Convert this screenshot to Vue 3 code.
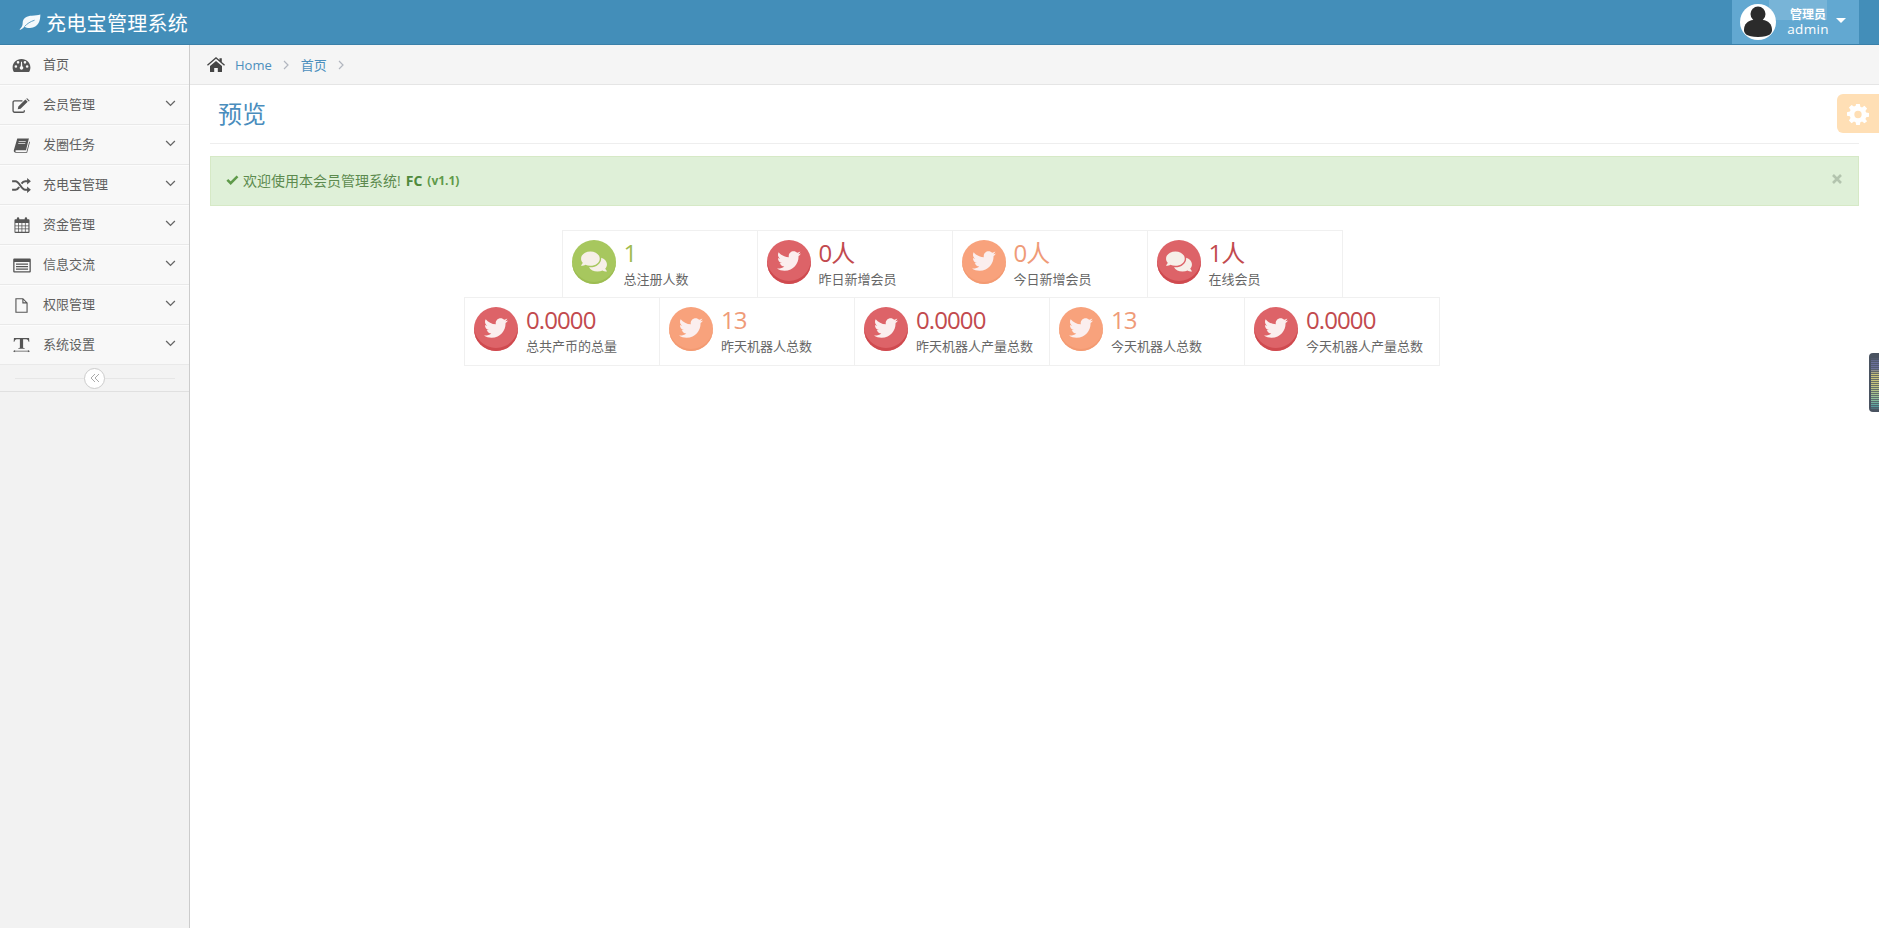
<script setup>
const TW = 'M459.37 151.716c.325 4.548.325 9.097.325 13.645 0 138.72-105.583 298.558-298.558 298.558-59.452 0-114.68-17.219-161.137-47.106 8.447.974 16.568 1.299 25.34 1.299 49.055 0 94.213-16.568 130.274-44.832-46.132-.975-84.792-31.188-98.112-72.772 6.498.974 12.995 1.624 19.818 1.624 9.421 0 18.843-1.3 27.614-3.573-48.081-9.747-84.143-51.98-84.143-102.985v-1.299c13.969 7.797 30.214 12.67 47.431 13.319-28.264-18.843-46.781-51.005-46.781-87.391 0-19.492 5.197-37.36 14.294-52.954 51.655 63.675 129.3 105.258 216.365 109.807-1.624-7.797-2.599-15.918-2.599-24.04 0-57.828 46.782-104.934 104.934-104.934 30.213 0 57.502 12.67 76.67 33.137 23.715-4.548 46.456-13.32 66.599-25.34-7.798 24.366-24.366 44.833-46.132 57.827 21.117-2.273 41.584-8.122 60.426-16.243-14.292 20.791-32.161 39.308-52.628 54.253z'
const CM = 'M416 192c0-88.4-93.1-160-208-160S0 103.6 0 192c0 34.3 14.1 65.9 38 92-13.4 30.2-35.5 54.2-35.8 54.5-2.2 2.3-2.8 5.7-1.5 8.7S4.8 352 8 352c36.6 0 66.9-12.3 88.7-25 32.2 15.7 70.3 25 111.3 25 114.9 0 208-71.6 208-160zm122 220c23.9-26 38-57.7 38-92 0-66.9-53.5-124.2-129.3-148.1.9 6.6 1.3 13.3 1.3 20.1 0 105.9-107.7 192-240 192-10.8 0-21.3-.8-31.7-1.9C207.8 439.6 281.8 480 368 480c41 0 79.1-9.2 111.3-25 21.8 12.7 52.1 25 88.7 25 3.2 0 6.1-1.9 7.3-4.8 1.3-2.9.7-6.3-1.5-8.7-.3-.3-22.4-24.2-35.8-54.5z'

const menu = [
  { text: '首页', icon: 'dash', arrow: false },
  { text: '会员管理', icon: 'edit', arrow: true },
  { text: '发圈任务', icon: 'book', arrow: true },
  { text: '充电宝管理', icon: 'shuffle', arrow: true },
  { text: '资金管理', icon: 'cal', arrow: true },
  { text: '信息交流', icon: 'list', arrow: true },
  { text: '权限管理', icon: 'file', arrow: true },
  { text: '系统设置', icon: 'text', arrow: true }
]
const row1 = [
  { v: '1', l: '总注册人数', c: 'green', i: 'cm' },
  { v: '0人', l: '昨日新增会员', c: 'red', i: 'tw' },
  { v: '0人', l: '今日新增会员', c: 'orange', i: 'tw' },
  { v: '1人', l: '在线会员', c: 'red', i: 'cm' }
]
const row2 = [
  { v: '0.0000', l: '总共产币的总量', c: 'red', i: 'tw' },
  { v: '13', l: '昨天机器人总数', c: 'orange', i: 'tw' },
  { v: '0.0000', l: '昨天机器人产量总数', c: 'red', i: 'tw' },
  { v: '13', l: '今天机器人总数', c: 'orange', i: 'tw' },
  { v: '0.0000', l: '今天机器人产量总数', c: 'red', i: 'tw' }
]
const rows = [row1, row2]
</script>

<template>
  <div class="page">
    <header class="navbar">
      <div class="brand">
        <svg class="leaf" viewBox="0 0 24 18" width="22" height="17"><path fill="#f4f9fc" d="M.5 16.500C3 14.500 4 12.500 4 9.500 4 4 9 1.500 14 1.500c4 0 6.500-.5 9.300-1.300 0 6.300-1.800 14.300-11.300 14.800-2.500.1-4.500-.5-6-1.500-1.500 1.500-3 2.700-4.300 3.500z"/><path fill="none" stroke="#438eb9" stroke-width=".9" d="M6 13.500C9 10 12.500 8 17 6.500"/></svg>
        <span>充电宝管理系统</span>
      </div>
      <div class="user">
        <span class="ghost"></span>
        <span class="avatar">
          <svg viewBox="0 0 36 36" width="36" height="36"><circle cx="18" cy="10" r="7.500" fill="#2b2b2b"/><path fill="#2b2b2b" d="M4 26c0-6 4-9.500 9-10h10c5 .5 9 4 9 10 0 3-2 7-14 7S4 29 4 26z"/></svg>
        </span>
        <span class="who"><small>管理员</small><b>admin</b></span>
        <span class="caret"></span>
      </div>
    </header>

    <div class="body">
      <aside class="sidebar">
        <ul class="nav">
          <li v-for="m in menu" :key="m.text" class="item">
            <span class="mi">
              <svg v-if="m.icon === 'dash'" viewBox="0 0 20 16" width="19" height="15"><path fill="#555" fill-rule="evenodd" d="M10 1C4.500 1 .5 5 .5 10c0 2 .6 3.700 1.500 5h16c.9-1.300 1.500-3 1.500-5 0-5-4-9-9.500-9zM4 10.500a1.400 1.400 0 1 1 0-2.800 1.400 1.400 0 0 1 0 2.800zM6.300 6a1.400 1.400 0 1 1 0-2.800 1.400 1.400 0 0 1 0 2.800zM10 12.500a2 2 0 0 1-.8-3.800L9.500 4h1l.3 4.700a2 2 0 0 1-.8 3.800zM13.700 6a1.400 1.400 0 1 1 0-2.800 1.400 1.400 0 0 1 0 2.800zM16 10.500a1.400 1.400 0 1 1 0-2.800 1.400 1.400 0 0 1 0 2.800z"/></svg>
              <svg v-else-if="m.icon === 'edit'" viewBox="0 0 20 16" width="19" height="15"><path fill="none" stroke="#555" stroke-width="1.400" d="M13 13v1a1.300 1.300 0 0 1-1.300 1.200H2.500A1.500 1.500 0 0 1 1 13.700V4.500A1.500 1.500 0 0 1 2.500 3H11"/><path fill="#555" d="M6 12l.6-3 7.500-7.500 2.500 2.500L9 11.500zM15 .8l1-.6 2.700 2.600-.8 1z"/></svg>
              <svg v-else-if="m.icon === 'book'" viewBox="0 0 18 16" width="17" height="15"><path fill="#555" d="M4.500 .5H17l-.4 1.200L13.800 13H3.500c-.8 0-1 .6-1 1s.3.800 1 .8h10.800l3-11 .7.500-3 11.400H3C1.500 15.700.5 14.500.8 13z"/><path fill="#eee" d="M6 3.500h7.500v.8H6zM5.500 5.500H13v.8H5.500z"/></svg>
              <svg v-else-if="m.icon === 'shuffle'" viewBox="0 0 20 16" width="19" height="15"><path fill="none" stroke="#555" stroke-width="2.200" d="M0 3.500h3.500c4.500 0 6 9 10.500 9h3M0 12.500h3.500c1.700 0 3-1.300 4-3M10 6c1-1.400 2.300-2.500 4-2.500h3"/><path fill="#555" d="M16 0l4 3.500-4 3.500zM16 9l4 3.500-4 3.500z"/></svg>
              <svg v-else-if="m.icon === 'cal'" viewBox="0 0 17 17" width="16" height="16"><path fill="#555" fill-rule="evenodd" d="M1.500 2.500H3V1.500a1.300 1.300 0 0 1 2.600 0v1h5.800v-1a1.300 1.300 0 0 1 2.600 0v1h1.500a1 1 0 0 1 1 1V16a1 1 0 0 1-1 1h-14a1 1 0 0 1-1-1V3.500a1 1 0 0 1 1-1zM1.500 6.500V9h2.800V6.500zm3.600 0V9h2.900V6.500zm3.700 0V9h2.800V6.500zm3.600 0V9h2.900V6.500zM1.500 9.800v2.500h2.800V9.800zm3.600 0v2.500h2.900V9.800zm3.700 0v2.500h2.800V9.800zm3.600 0v2.500h2.900V9.800zM1.500 13v2.800h2.800V13zm3.600 0v2.800h2.900V13zm3.700 0v2.800h2.800V13zm3.600 0v2.800h2.900V13z"/></svg>
              <svg v-else-if="m.icon === 'list'" viewBox="0 0 18 15" width="18" height="15"><path fill="#555" fill-rule="evenodd" d="M1.200 .5h15.600a1 1 0 0 1 1 1v12a1 1 0 0 1-1 1H1.200a1 1 0 0 1-1-1v-12a1 1 0 0 1 1-1zM1.500 4v9.200h15V4z"/><path fill="#555" d="M3 5.500h12v1.300H3zM3 8h12v1.300H3zM3 10.500h12v1.300H3z"/></svg>
              <svg v-else-if="m.icon === 'file'" viewBox="0 0 14 16" width="13" height="15"><path fill="none" stroke="#555" stroke-width="1.200" d="M1 .7h7.500L13 5.200v10H1zM8.500 .7v4.500H13"/></svg>
              <svg v-else viewBox="0 0 18 16" width="17" height="16"><path fill="#555" d="M1 .5h16l.3 4h-.8c-.4-1.800-1-2.700-2.500-2.700h-3.300V10c0 1 .3 1.200 1.600 1.300v.7H5.700v-.7C7 11.200 7.300 11 7.300 10V1.800H4c-1.500 0-2.100.9-2.500 2.700H.7z"/><path fill="#555" d="M0 14.500l2.200-1.300v.9h13.600v-.9l2.200 1.300-2.200 1.300v-.9H2.200v.9z"/></svg>
            </span>
            <span class="txt">{{ m.text }}</span>
            <svg v-if="m.arrow" class="chev" viewBox="0 0 12 8" width="11" height="7"><path fill="none" stroke="#666" stroke-width="1.500" d="M1 1.200l5 5 5-5"/></svg>
          </li>
        </ul>
        <div class="toggle">
          <span class="circle">
            <svg viewBox="0 0 10 10" width="10" height="10"><path fill="none" stroke="#aaa" stroke-width="1" d="M5 1L1 5l4 4M9 1L5 5l4 4"/></svg>
          </span>
        </div>
      </aside>

      <main class="main">
        <div class="crumbs">
          <svg viewBox="0 0 18 15" width="18" height="15"><path fill="#444" d="M9 0l3.500 3V1.200h2.300v3.700L18 7.700l-.9 1L9 1.800.9 8.700 0 7.700zM3 9l6-5 6 5v5.500a.5.500 0 0 1-.5.500h-3.700v-4H7.200v4H3.500a.5.500 0 0 1-.5-.5z"/></svg>
          <a class="home">Home</a>
          <svg class="sep" viewBox="0 0 6 10" width="6" height="10"><path fill="none" stroke="#b2b6bf" stroke-width="1.200" d="M1 1l4 4-4 4"/></svg>
          <a>首页</a>
          <svg class="sep" viewBox="0 0 6 10" width="6" height="10"><path fill="none" stroke="#b2b6bf" stroke-width="1.200" d="M1 1l4 4-4 4"/></svg>
        </div>

        <div class="gear">
          <svg viewBox="0 0 24 24" width="22" height="22"><path fill="#fff" fill-rule="evenodd" d="M10 1h4l.6 3.100 1.800.8L19 3.100 21.900 6l-1.800 2.600.8 1.800L24 11v4l-3.100.5-.8 1.900 1.800 2.600L19 22l-2.600-1.800-1.800.8L14 24h-4l-.6-3-1.800-.8L5 22l-2.900-3 1.800-2.600-.8-1.900L0 14v-4l3.100-.6.800-1.800L2.100 5 5 2.100l2.600 1.800 1.800-.8zM12 8.500a4 4 0 1 0 0 8 4 4 0 0 0 0-8z"/></svg>
        </div>
        <div class="widget"></div>

        <div class="content">
          <h1 class="title">预览</h1>

          <div class="alert">
            <svg viewBox="0 0 14 11" width="13" height="10"><path fill="none" stroke="#5f9a4a" stroke-width="2.800" d="M1.300 5.300l3.700 3.700 7.500-7.500"/></svg>
            <span>欢迎使用本会员管理系统!</span>
            <b class="fc">FC</b>
            <b class="ver">(v1.1)</b>
            <svg class="close" viewBox="0 0 10 10" width="10" height="10"><path stroke="#b3c4ae" stroke-width="2.600" d="M1 1l8 8M9 1l-8 8"/></svg>
          </div>

          <div class="stats">
            <div v-for="(row, ri) in rows" :key="ri" class="row">
              <div v-for="(s, si) in row" :key="si" class="stat">
                <span class="ball" :class="s.c">
                  <svg v-if="s.i === 'tw'" viewBox="0 0 512 512" width="24" height="24"><path :d="TW" fill="#fbeeee"/></svg>
                  <svg v-else viewBox="0 0 576 512" width="26" height="23"><path :d="CM" fill="#f6efe8"/></svg>
                </span>
                <span class="data">
                  <span class="val" :class="s.c + '-t'">{{ s.v }}</span>
                  <span class="lab">{{ s.l }}</span>
                </span>
              </div>
            </div>
          </div>
        </div>
      </main>
    </div>
  </div>
</template>

<style>
html, body { margin: 0; background: #fff; }
</style>

<style scoped>
.page { width: 1879px; height: 928px; overflow: hidden; display: flex; flex-direction: column; font-family: "Open Sans", "Noto Sans CJK SC", sans-serif; font-size: 13px; color: #393939; }
.navbar { height: 45px; flex: none; background: #438eb9; display: flex; justify-content: space-between; box-sizing: border-box; padding-right: 20px; border-bottom: 1px solid #3a80a9; }
.brand { display: flex; align-items: center; gap: 5px; padding-left: 19px; color: #fff; font-size: 20px; letter-spacing: 0.300px; }
.leaf { flex: none; }
.user { width: 127px; background: #62a8d1; position: relative; display: flex; align-items: center; color: #fff; box-sizing: border-box; padding-left: 7px; }
.ghost { position: absolute; left: 37px; top: 0; width: 58px; height: 20px; background: rgba(255, 255, 255, 0.14); }
.avatar { position: relative; width: 36px; height: 36px; border-radius: 50%; background: #fff; display: flex; align-items: center; justify-content: center; margin-left: 1px; overflow: hidden; }
.who { position: relative; display: flex; flex-direction: column; align-items: center; margin-left: 12px; width: 40px; line-height: 15px; padding-top: 1px; }
.who small { font-size: 12px; line-height: 14px; font-weight: 700; }
.who b { font-weight: 400; font-size: 13.500px; letter-spacing: 0.300px; }
.caret { width: 0; height: 0; border: 5.500px solid transparent; border-top-color: #fff; border-bottom: 0; margin-left: 8px; margin-top: -3px; }
.body { flex: 1; display: flex; min-height: 0; }
.sidebar { width: 190px; flex: none; box-sizing: border-box; background: #f2f2f2; border-right: 1px solid #ccc; }
.nav { list-style: none; margin: 0; padding: 0; }
.item { height: 40px; box-sizing: border-box; background: #f8f8f8; border-top: 1px solid #fcfcfc; border-bottom: 1px solid #e9e9e9; display: flex; align-items: center; color: #5f5f5f; font-size: 13px; position: relative; }
.mi { width: 43px; flex: none; display: flex; justify-content: center; }
.txt { flex: 1; margin-top: -4px; }
.chev { margin-right: 13px; margin-top: -3px; }
.toggle { height: 27px; box-sizing: border-box; background: #f3f3f3; border-bottom: 1px solid #e0e0e0; position: relative; display: flex; align-items: center; justify-content: center; }
.toggle::before { content: ""; position: absolute; left: 15px; right: 14px; top: 50%; height: 1px; background: #e6e6e6; }
.circle { position: relative; width: 19px; height: 19px; border-radius: 50%; background: #fff; border: 1px solid #ccc; display: flex; align-items: center; justify-content: center; }
.main { flex: 1; position: relative; min-width: 0; }
.crumbs { height: 40px; box-sizing: border-box; background: #f5f5f5; border-bottom: 1px solid #e5e5e5; display: flex; align-items: center; padding-left: 17px; color: #4c8fbd; font-size: 13px; }
.crumbs a { color: #4c8fbd; }
.home { margin-left: 10px; }
.sep { margin: 0 12px 0 11px; }
.gear { position: absolute; right: 0; top: 49px; width: 42px; height: 39px; background: #ffdfb5; border-radius: 6px 0 0 6px; display: flex; align-items: center; justify-content: center; }
.widget { position: absolute; right: 0; top: 308px; width: 10px; height: 59px; border-radius: 4px 0 0 4px; background-color: #4a5361; background-image: repeating-linear-gradient(to bottom, rgba(74, 83, 97, 0.75) 0 1px, transparent 1px 2px), linear-gradient(to bottom, #4a5361 0 8%, #6a6f9a 15%, #6a6f9a 26%, #c8c27a 36%, #c5c47e 55%, #8fc09a 78%, #57a0a0 90%, #4a5361 97%); box-shadow: inset 2px 0 0 #4a5361; }
.content { padding: 0 20px; }
.title { margin: 0; height: 59px; box-sizing: border-box; border-bottom: 1px solid #eee; padding: 11px 0 0 8px; font-size: 24px; line-height: 36px; font-weight: 400; color: #4a8dbd; }
.alert { margin-top: 12px; height: 50px; box-sizing: border-box; background: #dff0d8; border: 1px solid #d6e9c6; display: flex; align-items: center; padding: 0 0 2px 15px; color: #5c8a4e; font-size: 14px; position: relative; }
.alert span { margin-left: 4px; }
.fc { margin-left: 5px; font-size: 14px; color: #4f8a3c; }
.ver { margin-left: 5px; font-size: 12px; color: #5f9a4a; }
.close { position: absolute; right: 16px; top: 17px; }
.stats { margin-top: 25px; padding-right: 164px; display: flex; flex-direction: column; align-items: center; }
.row { display: flex; }
.stat { width: 196px; height: 68px; box-sizing: border-box; border: 1px solid #f0f0f0; margin-left: -1px; margin-top: -1px; display: flex; align-items: flex-start; padding: 9px 0 0 9px; }
.row + .row .stat { height: 69px; }
.ball { width: 44px; height: 44px; flex: none; border-radius: 50%; display: flex; align-items: center; justify-content: center; box-sizing: border-box; padding-bottom: 2px; }
.ball.red { background: #dd6368; box-shadow: inset 0 -3px 0 #cf4a4f; }
.ball.green { background: #a7c75e; box-shadow: inset 0 -2px 0 #9dbd52; }
.ball.orange { background: #f8a27c; box-shadow: inset 0 -2px 0 #f39a72; }
.data { display: flex; flex-direction: column; margin-left: 8px; }
.val { font-size: 24px; line-height: 32px; margin-top: -3px; letter-spacing: -0.900px; }
.red-t { color: #c24a4e; }
.green-t { color: #a0bb4f; }
.orange-t { color: #ef9b78; }
.lab { font-size: 13px; line-height: 18px; color: #666; margin-top: 1px; }
</style>
